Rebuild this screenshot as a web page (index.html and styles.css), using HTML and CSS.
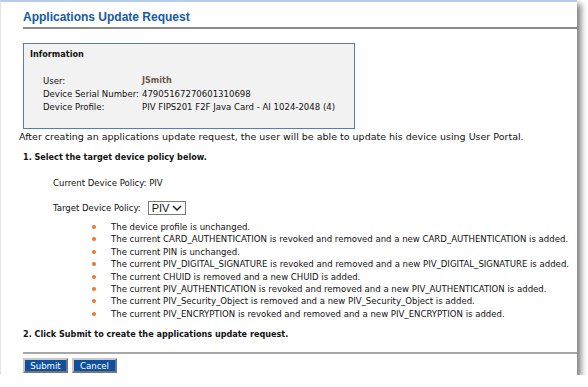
FILE: index.html
```html
<!DOCTYPE html>
<html lang="en">
<head>
    <meta charset="UTF-8">
    <title>Applications Update Request</title>
    <link rel="stylesheet" href="styles.css">
</head>
<body>
    <div class="window">
        <h1 class="title">Applications Update Request</h1>

        <div class="info-box">
            <div class="info-head">Information</div>
            <div class="info-rows">
                <div class="info-label">User:</div>
                <div class="info-value user-name">JSmith</div>
                <div class="info-label">Device Serial Number:</div>
                <div class="info-value">47905167270601310698</div>
                <div class="info-label">Device Profile:</div>
                <div class="info-value">PIV FIPS201 F2F Java Card - AI 1024-2048 (4)</div>
            </div>
        </div>

        <p class="note">After creating an applications update request, the user will be able to update his device using User Portal.</p>

        <h2 class="step">1. Select the target device policy below.</h2>

        <div class="policy">
            <div class="policy-row">Current Device Policy: PIV</div>
            <div class="policy-row target">
                <span>Target Device Policy:</span>
                <span class="select">PIV
                    <svg width="10" height="6" viewBox="0 0 10 6"><path d="M1 1 L5 5 L9 1" fill="none" stroke="#222" stroke-width="1.5"/></svg>
                </span>
            </div>
        </div>

        <ul class="changes">
            <li>The device profile is unchanged.</li>
            <li>The current CARD_AUTHENTICATION is revoked and removed and a new CARD_AUTHENTICATION is added.</li>
            <li>The current PIN is unchanged.</li>
            <li>The current PIV_DIGITAL_SIGNATURE is revoked and removed and a new PIV_DIGITAL_SIGNATURE is added.</li>
            <li>The current CHUID is removed and a new CHUID is added.</li>
            <li>The current PIV_AUTHENTICATION is revoked and removed and a new PIV_AUTHENTICATION is added.</li>
            <li>The current PIV_Security_Object is removed and a new PIV_Security_Object is added.</li>
            <li>The current PIV_ENCRYPTION is revoked and removed and a new PIV_ENCRYPTION is added.</li>
        </ul>

        <h2 class="step step-two">2. Click Submit to create the applications update request.</h2>

        <div class="button-bar">
            <button class="btn">Submit</button>
            <button class="btn">Cancel</button>
        </div>
    </div>
</body>
</html>
```

FILE: styles.css
```css
* {
    margin: 0;
    padding: 0;
    box-sizing: border-box;
}

body {
    background: #ffffff;
    font-family: "DejaVu Sans Condensed", "DejaVu Sans", sans-serif;
    font-size: 9.5px;
    color: #111;
}

.window {
    width: 577px;
    height: 375px;
    background: #ffffff;
    border-top: 2px solid #b4cbe9;
    border-left: 1px solid #e4e4e4;
    box-shadow: 4px 4px 6px rgba(0, 0, 0, 0.5);
    padding: 7px 0 0 22px;
}

.title {
    font-family: "Liberation Sans", Arial, sans-serif;
    font-size: 12px;
    font-weight: bold;
    color: #1459a3;
    line-height: 16px;
    padding-bottom: 2px;
    border-bottom: 2px solid #8a8a8a;
    margin-bottom: 14px;
}

.info-box {
    width: 332px;
    height: 86px;
    background: #f2f2f2;
    border: 1px solid #4f7fbd;
    padding: 4px 6px;
}

.info-head {
    font-size: 9px;
    font-weight: bold;
    line-height: 12px;
}

.info-rows {
    display: grid;
    grid-template-columns: 99px auto;
    margin: 14px 0 0 13px;
    line-height: 13px;
}

.user-name {
    font-weight: bold;
    font-size: 9px;
    color: #6b5a4a;
}

.note {
    font-family: "DejaVu Sans", sans-serif;
    font-size: 9.5px;
    margin: 1px 0 0 -4px;
    line-height: 14px;
}

.step {
    font-size: 9px;
    font-weight: bold;
    line-height: 14px;
    margin-top: 6px;
}

.policy {
    margin: 12px 0 0 30px;
}

.policy-row {
    line-height: 14px;
}

.policy-row.target {
    display: flex;
    align-items: center;
    gap: 7px;
    margin-top: 11px;
}

.select {
    display: inline-flex;
    align-items: center;
    gap: 3px;
    height: 14px;
    padding: 0 3px;
    border: 1px solid #7a7a7a;
    font-family: "Liberation Sans", Arial, sans-serif;
    font-size: 11px;
    background: #fff;
}

.changes {
    list-style: none;
    margin: 6px 0 0 88px;
}

.changes li {
    position: relative;
    line-height: 12.4px;
}

.changes li::before {
    content: "";
    position: absolute;
    left: -19px;
    top: 4px;
    width: 4px;
    height: 4px;
    border-radius: 50%;
    background: #e8782a;
}

.step-two {
    margin-top: 7px;
}

.button-bar {
    margin-top: 11px;
    border-top: 2px solid #a8a8a8;
    padding-top: 4px;
    display: flex;
    gap: 4px;
}

.btn {
    font-family: "DejaVu Sans Condensed", "DejaVu Sans", sans-serif;
    font-size: 9.5px;
    color: #fff;
    background: #0e4f9e;
    border: 2px outset #c8c8c8;
    height: 15px;
    width: 45px;
    line-height: 10px;
}
```
